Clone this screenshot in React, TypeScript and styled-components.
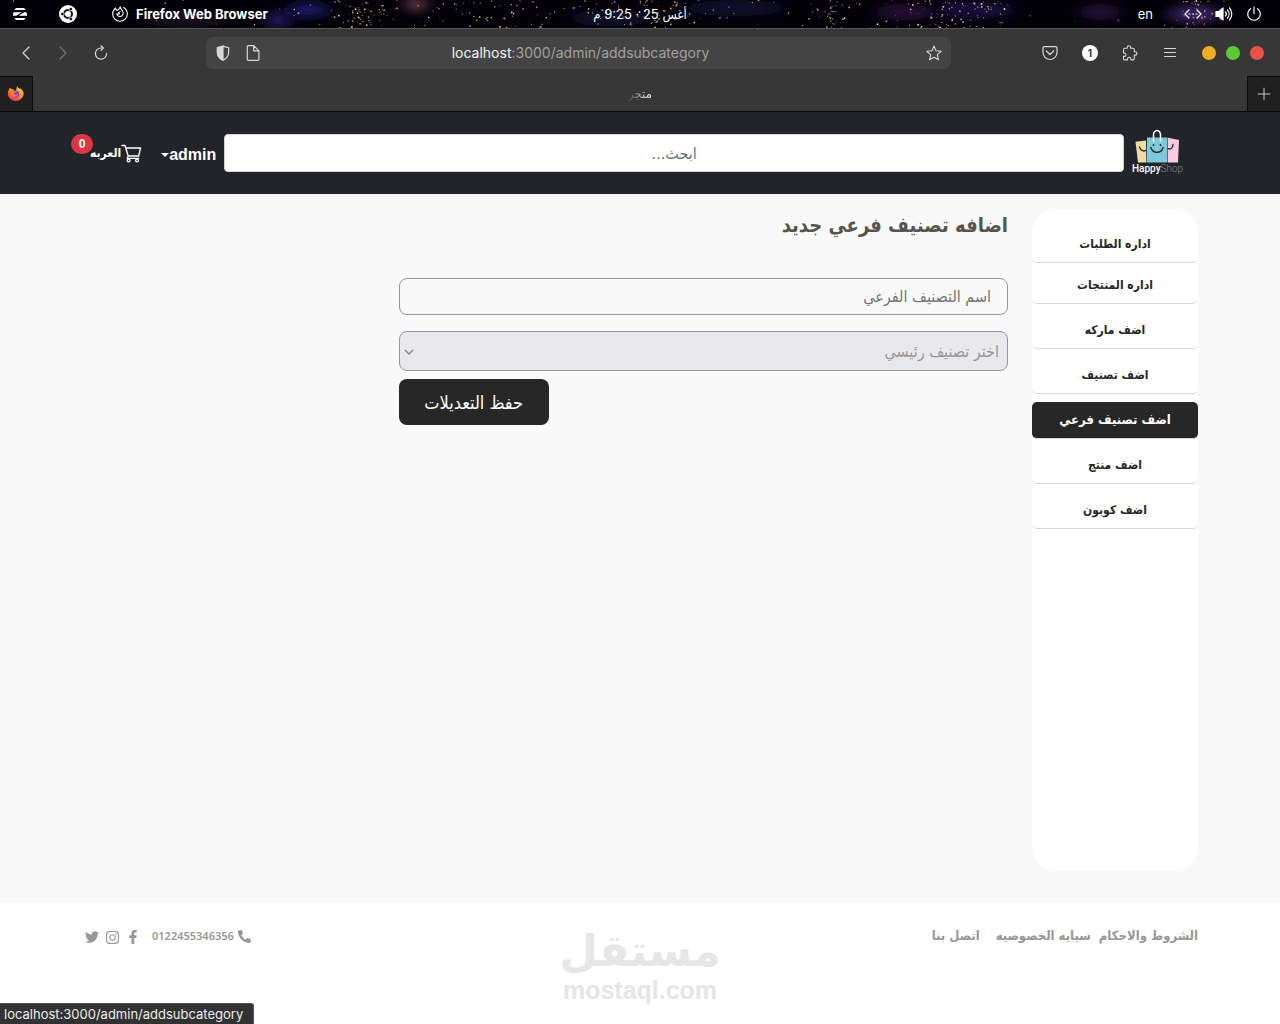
import React from "react";
import styled, { createGlobalStyle } from "styled-components";
import { Plus } from "lucide-react";
import { FaFacebookF, FaInstagram, FaPhoneAlt, FaTwitter } from "react-icons/fa";

const uiFont = `Inter, "Liberation Sans", "DejaVu Sans Condensed", "DejaVu Sans", sans-serif`;
const arabicFont = `"DejaVu Sans Condensed", "DejaVu Sans", sans-serif`;

const GlobalStyle = createGlobalStyle`
  *, *::before, *::after { box-sizing: border-box; }
  body { margin: 0; background: #f9f9f9; font-family: ${arabicFont}; }
  button, input, select { font-family: inherit; margin: 0; }
  a { color: inherit; text-decoration: none; }
  h1, ul { margin: 0; padding: 0; }
  svg { display: block; flex: none; }
`;

/* ---------- desktop top bar ---------- */

const Screen = styled.div`
  min-height: 100vh;
  display: flex;
  flex-direction: column;
`;

const SystemBar = styled.div`
  position: relative;
  height: 28px;
  display: grid;
  grid-template-columns: 1fr auto 1fr;
  align-items: center;
  padding: 0 12px;
  background: #020108;
  color: #fff;
  font: 400 13px/20px ${uiFont};
  overflow: hidden;
`;

const Sky = styled.svg`
  position: absolute;
  inset: 0;
  width: 100%;
  height: 100%;
`;

const SystemGroup = styled.div<{ $end?: boolean; $gap: number }>`
  position: relative;
  display: flex;
  align-items: center;
  justify-content: ${(p) => (p.$end ? "flex-end" : "flex-start")};
  gap: ${(p) => p.$gap}px;
  padding-right: ${(p) => (p.$end ? 6 : 0)}px;
`;

const AppName = styled.span`
  display: flex;
  align-items: center;
  gap: 8px;
  margin-left: 4px;
  font-weight: 700;
`;

const Clock = styled.span`
  position: relative;
`;

const Language = styled.span`
  margin-right: 18px;
`;

/* ---------- browser window ---------- */

const Toolbar = styled.div`
  height: 48px;
  display: flex;
  align-items: center;
  padding: 0 16px;
  background: #373737;
  border-top: 1px solid #565656;
  color: #dcdcdc;
`;

const ToolGroup = styled.div<{ $width: number; $gap: number; $end?: boolean }>`
  flex: 0 0 ${(p) => p.$width}px;
  display: flex;
  align-items: center;
  justify-content: ${(p) => (p.$end ? "flex-end" : "flex-start")};
  gap: ${(p) => p.$gap}px;
`;

const IconButton = styled.button<{ $dim?: boolean }>`
  display: grid;
  place-items: center;
  width: 20px;
  height: 20px;
  padding: 0;
  border: 0;
  background: none;
  color: ${(p) => (p.$dim ? "#747474" : "#d8d8d8")};
`;

const AddressBar = styled.div`
  flex: 1;
  height: 32px;
  display: flex;
  align-items: center;
  gap: 10px;
  padding: 0 7px;
  border-radius: 7px;
  background: #444;
`;

const Address = styled.span`
  flex: 1;
  text-align: center;
  padding-right: 26px;
  color: #a0a0a0;
  font: 400 14px/20px ${uiFont};

  b {
    color: #f4f4f4;
    font-weight: 400;
  }
`;

const CountBadge = styled.span`
  display: grid;
  place-items: center;
  width: 16px;
  height: 16px;
  margin: 0 2px;
  border-radius: 50%;
  background: #fff;
  color: #333;
  font: 700 10px/16px ${uiFont};
`;

const WindowButtons = styled.div`
  display: flex;
  gap: 10px;
  margin-left: 2px;
`;

const WindowDot = styled.button<{ $color: string }>`
  width: 14px;
  height: 14px;
  padding: 0;
  border: 0;
  border-radius: 50%;
  background: ${(p) => p.$color};
`;

const TabStrip = styled.div`
  height: 36px;
  display: flex;
  background: #373737;
  border-bottom: 1px solid #0b0b0b;
`;

const TabEdge = styled.button<{ $side: "left" | "right" }>`
  width: 33px;
  display: grid;
  place-items: center;
  padding: 0;
  border: 0 solid #0b0b0b;
  border-top-width: 1px;
  border-right-width: ${(p) => (p.$side === "left" ? 1 : 0)}px;
  border-left-width: ${(p) => (p.$side === "right" ? 1 : 0)}px;
  background: #202020;
  color: #e6e6e6;
`;

const TabTitle = styled.span`
  flex: 1;
  text-align: center;
  font: 400 13px/36px ${arabicFont};
  color: transparent;

  span {
    background: linear-gradient(to left, #e0e0e0 20%, #444 100%);
    background-clip: text;
  }
`;

/* ---------- shop page ---------- */

const Page = styled.div`
  flex: 1;
  display: flex;
  flex-direction: column;
  background: #f9f9f9;
`;

const Container = styled.div`
  width: 100%;
  max-width: 1140px;
  margin: 0 auto;
  padding: 0 12px;
`;

const Header = styled.header`
  background: #212529;
  padding: 16px 0;
`;

const HeaderRow = styled(Container)`
  display: flex;
  align-items: center;
  padding-right: 28px;
  height: 50px;
`;

const LogoLink = styled.a`
  margin-left: 8px;
`;

const LogoDrawing = styled.svg`
  overflow: visible;
`;

const Search = styled.input`
  flex: 1;
  min-width: 0;
  height: 38px;
  border: 1px solid #ced4da;
  border-radius: 4px;
  background: #fff;
  text-align: center;
  font-size: 16px;

  &::placeholder {
    color: #6c757d;
    opacity: 1;
  }
`;

const UserMenu = styled.button`
  display: flex;
  align-items: center;
  padding: 3px 8px 0;
  border: 0;
  background: none;
  color: #fff;
  font: 700 16px/24px "Liberation Sans", sans-serif;

  &::after {
    content: "";
    border: 4px solid transparent;
    border-top-color: #fff;
    border-bottom: 0;
  }
`;

const CartLink = styled.a`
  position: relative;
  display: flex;
  align-items: center;
  margin-right: 3px;
  padding: 0 8px;
  color: #fff;
  font-size: 12px;
  font-weight: 700;
  line-height: 20px;
`;

const CartBadge = styled.span`
  position: absolute;
  left: -11px;
  top: -9px;
  width: 22px;
  border-radius: 10px;
  background: #dc3545;
  text-align: center;
  font: 700 12px/20px "Liberation Sans", sans-serif;
`;

const Body = styled(Container)`
  flex: 1;
  display: grid;
  grid-template-columns: repeat(12, minmax(0, 1fr));
  column-gap: 24px;
  padding-top: 16px;
  padding-bottom: 32px;
`;

const Sidebar = styled.nav`
  grid-column: span 2;
  min-height: 480px;
  border-radius: 22px;
  background: #fff;
`;

const MenuList = styled.ul`
  list-style: none;
  padding-top: 16px;
`;

const MenuItem = styled.li<{ $space: number }>`
  margin-top: ${(p) => p.$space}px;
`;

const MenuLink = styled.a<{ $active?: boolean }>`
  display: block;
  height: 37px;
  border-bottom: 1px solid #d8d8d8;
  border-radius: 5px;
  background: ${(p) => (p.$active ? "#272727" : "#fff")};
  color: ${(p) => (p.$active ? "#fff" : "#272727")};
  text-align: center;
  font-size: ${(p) => (p.$active ? 13 : 12)}px;
  font-weight: 700;
  line-height: 36px;
`;

const Content = styled.main`
  grid-column: span 10;
`;

const Title = styled.h1`
  margin-bottom: 38px;
  color: #555550;
  font-size: 20px;
  font-weight: 700;
  line-height: 30px;
`;

const FormGrid = styled.form`
  display: grid;
  grid-template-columns: repeat(12, minmax(0, 1fr));
  column-gap: 24px;
`;

const Fields = styled.div`
  grid-column: span 8;
  display: flex;
  flex-direction: column;
`;

const TextField = styled.input`
  height: 37px;
  margin-bottom: 16px;
  padding: 0 16px;
  border: 1px solid #979797;
  border-radius: 8px;
  background: #f9f9f9;
  font-size: 16px;

  &::placeholder {
    color: #757575;
    opacity: 1;
  }
`;

const SelectBox = styled.div`
  position: relative;
  display: flex;
  margin-bottom: 8px;

  svg {
    position: absolute;
    left: 5px;
    top: 16px;
  }
`;

const Select = styled.select`
  flex: 1;
  height: 40px;
  padding: 0 8px;
  border: 1px solid #979797;
  border-radius: 8px;
  appearance: none;
  background: #e9e9ed;
  color: #979797;
  font-size: 16px;
`;

const SaveButton = styled.button`
  align-self: flex-end;
  width: 150px;
  height: 46px;
  border: 0;
  border-radius: 8px;
  background: #272727;
  color: #fff;
  font-size: 18px;
`;

const Footer = styled.footer`
  position: relative;
  min-height: 122px;
  background: #fff;
  color: #979797;
`;

const FooterRow = styled(Container)`
  display: flex;
  align-items: center;
  padding-top: 24px;
  font-size: 13px;
  font-weight: 700;
  line-height: 20px;
`;

const FooterLink = styled.a<{ $space?: number }>`
  margin-left: ${(p) => p.$space ?? 0}px;
`;

const Contact = styled.div`
  display: flex;
  align-items: center;
  gap: 4px;
  margin-right: auto;
  margin-left: 12px;
  font: 600 11px/20px "Noto Sans", sans-serif;
`;

const Social = styled.div`
  display: flex;
  align-items: center;
  gap: 6px;
  padding: 2px 0 0 3px;
`;

const Watermark = styled.div`
  position: absolute;
  left: 50%;
  top: 24px;
  transform: translateX(-50%);
  display: flex;
  flex-direction: column;
  align-items: center;
  color: #e6e6e6;
`;

const WatermarkName = styled.span`
  font: 700 44px/50px "DejaVu Sans", sans-serif;
`;

const WatermarkDomain = styled.span`
  font: 700 25px/28px "Liberation Sans", sans-serif;
`;

const StatusLink = styled.div`
  position: fixed;
  left: 0;
  bottom: 0;
  height: 21px;
  padding: 0 10px 0 4px;
  border: 1px solid #555;
  border-width: 1px 1px 0 0;
  border-radius: 0 3px 0 0;
  background: #323232;
  color: #eee;
  font: 400 13px/21px ${uiFont};
`;

/* ---------- drawings ---------- */

const clusters = [
  { from: 0, to: 1280, count: 90 },
  { from: 325, to: 400, count: 65 },
  { from: 400, to: 590, count: 45 },
  { from: 590, to: 710, count: 45 },
  { from: 805, to: 860, count: 35 },
  { from: 875, to: 1015, count: 90 },
  { from: 1165, to: 1225, count: 35 },
];

const starColors = ["#f3d2a2", "#c79a7c", "#8f6a86", "#b98f6a", "#6b4f7e"];

function makeStars() {
  let seed = 11;
  const next = () => {
    seed = (seed * 16807) % 2147483647;
    return seed / 2147483647;
  };
  return clusters.flatMap(({ from, to, count }) =>
    Array.from({ length: count }, () => ({
      x: from + ((next() + next()) / 2) * (to - from),
      y: next() * 28,
      r: 0.4 + next() * 0.6,
      color: starColors[Math.floor(next() * starColors.length)],
    })),
  );
}

const stars = makeStars();

const clouds = [
  { x: 308, y: 10, w: 20, h: 8, color: "#181560" },
  { x: 278, y: 20, w: 12, h: 10, color: "#1c1458" },
  { x: 416, y: 4, w: 9, h: 8, color: "#6b3c50" },
  { x: 185, y: 20, w: 40, h: 8, color: "#12081e" },
  { x: 610, y: 18, w: 40, h: 8, color: "#0a0a2a" },
  { x: 735, y: 8, w: 50, h: 8, color: "#0a0b2c" },
  { x: 905, y: 12, w: 30, h: 8, color: "#231030" },
  { x: 975, y: 10, w: 40, h: 8, color: "#17103c" },
  { x: 1100, y: 12, w: 20, h: 8, color: "#220e36" },
  { x: 1195, y: 14, w: 26, h: 9, color: "#35225e" },
];

const NightSky = () => (
  <Sky viewBox="0 0 1280 28" preserveAspectRatio="xMidYMid slice" aria-hidden>
    <defs>
      <filter id="haze" x="-100%" y="-100%" width="300%" height="300%">
        <feGaussianBlur stdDeviation="8 4" />
      </filter>
    </defs>
    {clouds.map((c) => (
      <ellipse key={c.x} cx={c.x} cy={c.y} rx={c.w} ry={c.h} fill={c.color} filter="url(#haze)" />
    ))}
    {stars.map((s, i) => (
      <circle key={i} cx={s.x} cy={s.y} r={s.r} fill={s.color} />
    ))}
  </Sky>
);

const line = { fill: "none", stroke: "currentColor", strokeLinecap: "round", strokeLinejoin: "round" } as const;

const ZorinIcon = () => (
  <svg width="16" height="16" viewBox="0 0 16 16" fill="#fff">
    <path d="M4 2h8l1.700 2H2.300zM1.400 6.200h8.400L4.200 9.800H.9zM14.600 6.200h-2.400L6.600 9.800h8.500zM2.300 12h11.400L12 14H4z" />
  </svg>
);

const UbuntuIcon = () => (
  <svg width="18" height="18" viewBox="0 0 18 18">
    <circle cx="9" cy="9" r="9" fill="#fff" />
    <circle cx="9" cy="9" r="4" fill="none" stroke="#111" strokeWidth="2" />
    <g fill="#111" stroke="#fff" strokeWidth=".8">
      <circle cx="3.400" cy="9" r="1.800" />
      <circle cx="11.800" cy="4.100" r="1.800" />
      <circle cx="11.800" cy="13.900" r="1.800" />
    </g>
  </svg>
);

const FirefoxOutline = () => (
  <svg width="16" height="16" viewBox="0 0 16 16" {...line} strokeWidth="1.100">
    <path d="M3.500 2.200C1.700 3.500.7 5.600.7 8a7.300 7.300 0 0 0 14.600 0c0-2.700-1.400-5.200-3.800-6.500" />
    <path d="M3.500 2.200l.8 1.900c1 .1 1.700-.1 2.400-.6L8.300.8c0 2 1.300 2.700 2.200 4 1.300 1.900.7 5.700-2.500 5.700-2 0-3.200-1.500-3-3 .7.800 1.900.8 2.600.2l-1.300-.9 1.800-1.200" />
  </svg>
);

const NetworkIcon = () => (
  <svg width="18" height="16" viewBox="0 0 18 16" {...line} strokeWidth="1.200">
    <path d="M5 4L1 8l4 4M13 4l4 4-4 4M5 8h1M8.500 8h1M12 8h1" />
  </svg>
);

const VolumeIcon = () => (
  <svg width="18" height="16" viewBox="0 0 18 16" {...line} strokeWidth="1.200">
    <path d="M1 5.500h3L8 2v12l-4-3.500H1z" fill="currentColor" />
    <path d="M10.500 6a3 3 0 0 1 0 4M12.500 4a6 6 0 0 1 0 8M14.500 2a9 9 0 0 1 0 12" />
  </svg>
);

const PowerIcon = () => (
  <svg width="16" height="16" viewBox="0 0 16 16" {...line} strokeWidth="1.200">
    <path d="M8 1v6.500M4.500 2.700a6.300 6.300 0 1 0 7 0" />
  </svg>
);

const ChevronIcon = ({ flip }: { flip?: boolean }) => (
  <svg width="16" height="16" viewBox="0 0 16 16" {...line} strokeWidth="1.200">
    <path d={flip ? "M5 2l6 6-6 6" : "M11 2L5 8l6 6"} />
  </svg>
);

const ReloadIcon = () => (
  <svg width="16" height="16" viewBox="0 0 16 16" {...line} strokeWidth="1.200">
    <path d="M11 3H9a5.600 5.600 0 1 0 5.600 5.600M9 .8L11.300 3 9 5.300" />
  </svg>
);

const ShieldIcon = () => (
  <svg width="18" height="18" viewBox="0 0 18 18" {...line} strokeWidth="1.200">
    <path d="M9 2c2 1 4 1.500 5.600 1.500v5c0 3.500-2 6-5.600 7.700C5.400 14.500 3.400 12 3.400 8.500v-5C5 3.500 7 3 9 2z" />
    <path d="M9 2v14.200C5.400 14.500 3.400 12 3.400 8.500v-5C5 3.500 7 3 9 2z" fill="currentColor" />
  </svg>
);

const PageIcon = () => (
  <svg width="18" height="18" viewBox="0 0 18 18" {...line} strokeWidth="1.200">
    <path d="M4.500 1.600h5.200l5.200 5.200v8.400q0 1.200-1.200 1.200H4.500q-1.200 0-1.200-1.200V2.800q0-1.200 1.200-1.200zM9.700 1.800v5h5" />
  </svg>
);

const StarIcon = () => (
  <svg width="16" height="16" viewBox="0 0 16 16" {...line} strokeWidth="1.100">
    <path d="M8 1l2.100 4.800 5.100.5-3.900 3.400 1.200 5.100L8 12.200l-4.500 2.600 1.200-5.100L.8 6.300l5.100-.5z" />
  </svg>
);

const PocketIcon = () => (
  <svg width="16" height="16" viewBox="0 0 16 16" {...line} strokeWidth="1.200">
    <path d="M2.300 1.600h11.400q1.300 0 1.300 1.300v4.600a7 7 0 0 1-14 0V2.900q0-1.300 1.300-1.300zM4.300 6L8 9.500 11.700 6" />
  </svg>
);

const PuzzleIcon = () => (
  <svg width="16" height="16" viewBox="0 0 16 16" {...line} strokeWidth="1.100">
    <path d="M1.500 4.500q0-1.300 1.300-1.300h2.400V2.500a1.700 1.700 0 0 1 3.400 0v.7H11q1.300 0 1.300 1.300v2.200h.9a1.700 1.700 0 0 1 0 3.400h-.9v3.500q0 1.300-1.300 1.300H9v-1a1.700 1.700 0 0 0-3.400 0v1H2.800q-1.300 0-1.300-1.300v-2.200h.8a1.700 1.700 0 0 0 0-3.400h-.8z" />
  </svg>
);

const MenuIcon = () => (
  <svg width="16" height="16" viewBox="0 0 16 16" {...line} strokeWidth="1">
    <path d="M2.500 3.500h11M2.500 7.500h11M2.500 11.500h11" />
  </svg>
);

const FirefoxLogo = () => (
  <svg width="18" height="18" viewBox="0 0 18 18">
    <defs>
      <linearGradient id="flame" x1=".8" y1="0" x2=".2" y2="1">
        <stop offset="0" stopColor="#ffe03a" />
        <stop offset=".45" stopColor="#ff8a2a" />
        <stop offset="1" stopColor="#ee2a60" />
      </linearGradient>
    </defs>
    <path
      d="M2.500 3.800l.5-1.300 1.300 1.400 2 .4L7 5.500 9 6 10 1c.6 1.500 1.800 2 2.500 3l.8-.7c1.800 1.500 3.400 3.500 3.400 5.700a8 8 0 0 1-15.900 0c0-2 .7-4 1.700-5.200z"
      fill="url(#flame)"
    />
    <circle cx="9" cy="9" r="3.300" fill="#7546d8" />
    <path d="M4.500 6.500c2-1 4-.5 5 .5-1.500 0-1.600 1.300-2.800 1.400.8 1.400 2.600 1.600 4.500.8-1 3-5.900 3.200-6.900.2-.3-1-.2-2 .2-2.900z" fill="#ff7a35" />
  </svg>
);

const CartIcon = () => (
  <svg width="21" height="20" viewBox="0 0 21 20" {...line} strokeWidth="1.300">
    <path d="M1 2.500h3l3.200 10.500h10.500L19.500 5H4.800M7.200 13l-1 2.300h11.500" />
    <circle cx="7.600" cy="17.500" r="1.400" />
    <circle cx="16" cy="17.500" r="1.400" />
  </svg>
);

const ShopLogo = () => (
  <LogoDrawing width="50" height="50" viewBox="0 0 50 50" direction="ltr" role="img" aria-label="HappyShop">
    <path d="M3.500 13.800L14 12.500v22H6z" fill="#f0dba2" />
    <path d="M36 9.700l11 2.300-1 22.500H36z" fill="#f9cbe2" />
    <path d="M15 9.500h20.500v25h-21z" fill="#7cc9d9" />
    <g fill="none" strokeLinecap="round">
      <path d="M21.500 13V6.800a3.500 4.300 0 0 1 7 0V13" stroke="#fff" strokeWidth="1.500" />
      <path d="M19 19.500c1.500 6.500 10.500 6.500 12 0M7.500 19c1.300 4 4.700 4.500 6 3.500M36 20.500c3 1.500 4.700-.5 5-4" stroke="#20262b" strokeWidth="1.300" />
    </g>
    <circle cx="21.500" cy="17" r=".9" fill="#20262b" />
    <circle cx="28.500" cy="17" r=".9" fill="#20262b" />
    <text x="0" y="44" fontFamily="Roboto, sans-serif" fontSize="10">
      <tspan fill="#fff" fontWeight="500">Happy</tspan>
      <tspan fill="#858a8e" fontWeight="300">Shop</tspan>
    </text>
  </LogoDrawing>
);

const menu = [
  { label: "اداره الطلبات", space: 0 },
  { label: "اداره المنتجات", space: 4 },
  { label: "اضف ماركه", space: 8 },
  { label: "اضف تصنيف", space: 8 },
  { label: "اضف تصنيف فرعي", space: 8, active: true },
  { label: "اضف منتج", space: 8 },
  { label: "اضف كوبون", space: 8 },
];

export default function App() {
  return (
    <Screen>
      <GlobalStyle />
      <SystemBar>
        <NightSky />
        <SystemGroup $gap={31}>
          <ZorinIcon />
          <UbuntuIcon />
          <AppName>
            <FirefoxOutline />
            Firefox Web Browser
          </AppName>
        </SystemGroup>
        <Clock dir="rtl">أغس 25 · 9:25 م</Clock>
        <SystemGroup $end $gap={13}>
          <Language>en</Language>
          <NetworkIcon />
          <VolumeIcon />
          <PowerIcon />
        </SystemGroup>
      </SystemBar>

      <Toolbar>
        <ToolGroup $width={190} $gap={17}>
          <IconButton aria-label="Back"><ChevronIcon /></IconButton>
          <IconButton aria-label="Forward" $dim><ChevronIcon flip /></IconButton>
          <IconButton aria-label="Reload"><ReloadIcon /></IconButton>
        </ToolGroup>
        <AddressBar>
          <IconButton aria-label="Protection"><ShieldIcon /></IconButton>
          <IconButton aria-label="Site information"><PageIcon /></IconButton>
          <Address><b>localhost</b>:3000/admin/addsubcategory</Address>
          <IconButton aria-label="Bookmark"><StarIcon /></IconButton>
        </AddressBar>
        <ToolGroup $width={313} $gap={20} $end>
          <IconButton aria-label="Pocket"><PocketIcon /></IconButton>
          <CountBadge>1</CountBadge>
          <IconButton aria-label="Extensions"><PuzzleIcon /></IconButton>
          <IconButton aria-label="Menu"><MenuIcon /></IconButton>
          <WindowButtons>
            <WindowDot $color="#f0ac23" aria-label="Minimize" />
            <WindowDot $color="#5ac935" aria-label="Maximize" />
            <WindowDot $color="#e9524a" aria-label="Close" />
          </WindowButtons>
        </ToolGroup>
      </Toolbar>

      <TabStrip>
        <TabEdge $side="left" aria-label="Firefox"><FirefoxLogo /></TabEdge>
        <TabTitle dir="rtl"><span>متجر</span></TabTitle>
        <TabEdge $side="right" aria-label="New tab"><Plus size={20} strokeWidth={1} /></TabEdge>
      </TabStrip>

      <Page dir="rtl">
        <Header>
          <HeaderRow>
            <LogoLink href="#home"><ShopLogo /></LogoLink>
            <Search type="text" placeholder="ابحث..." aria-label="ابحث" />
            <UserMenu>admin</UserMenu>
            <CartLink href="#cart">
              <CartIcon />
              العربه
              <CartBadge>0</CartBadge>
            </CartLink>
          </HeaderRow>
        </Header>

        <Body>
          <Sidebar>
            <MenuList>
              {menu.map((m) => (
                <MenuItem key={m.label} $space={m.space}>
                  <MenuLink href="#admin" $active={m.active}>{m.label}</MenuLink>
                </MenuItem>
              ))}
            </MenuList>
          </Sidebar>
          <Content>
            <Title>اضافه تصنيف فرعي جديد</Title>
            <FormGrid onSubmit={(e: React.FormEvent) => e.preventDefault()}>
              <Fields>
                <TextField type="text" placeholder="اسم التصنيف الفرعي" aria-label="اسم التصنيف الفرعي" />
                <SelectBox>
                  <Select aria-label="اختر تصنيف رئيسي" defaultValue="0">
                    <option value="0">اختر تصنيف رئيسي</option>
                  </Select>
                  <svg width="10" height="10" viewBox="0 0 10 10" fill="none" stroke="#8a8a94" strokeWidth="1.500">
                    <path d="M1 3l4 4 4-4" />
                  </svg>
                </SelectBox>
                <SaveButton type="submit">حفظ التعديلات</SaveButton>
              </Fields>
            </FormGrid>
          </Content>
        </Body>

        <Footer>
          <FooterRow>
            <FooterLink href="#terms" $space={8}>الشروط والاحكام</FooterLink>
            <FooterLink href="#privacy" $space={16}>سيايه الخصوصيه</FooterLink>
            <FooterLink href="#contact">اتصل بنا</FooterLink>
            <Contact>
              <FaPhoneAlt size={13} />
              0122455346356
            </Contact>
            <Social>
              <a href="#facebook" aria-label="Facebook"><FaFacebookF size={14} /></a>
              <a href="#instagram" aria-label="Instagram"><FaInstagram size={15} /></a>
              <a href="#twitter" aria-label="Twitter"><FaTwitter size={14} /></a>
            </Social>
          </FooterRow>
          <Watermark>
            <WatermarkName>مستقل</WatermarkName>
            <WatermarkDomain>mostaql.com</WatermarkDomain>
          </Watermark>
        </Footer>
      </Page>

      <StatusLink>localhost:3000/admin/addsubcategory</StatusLink>
    </Screen>
  );
}
